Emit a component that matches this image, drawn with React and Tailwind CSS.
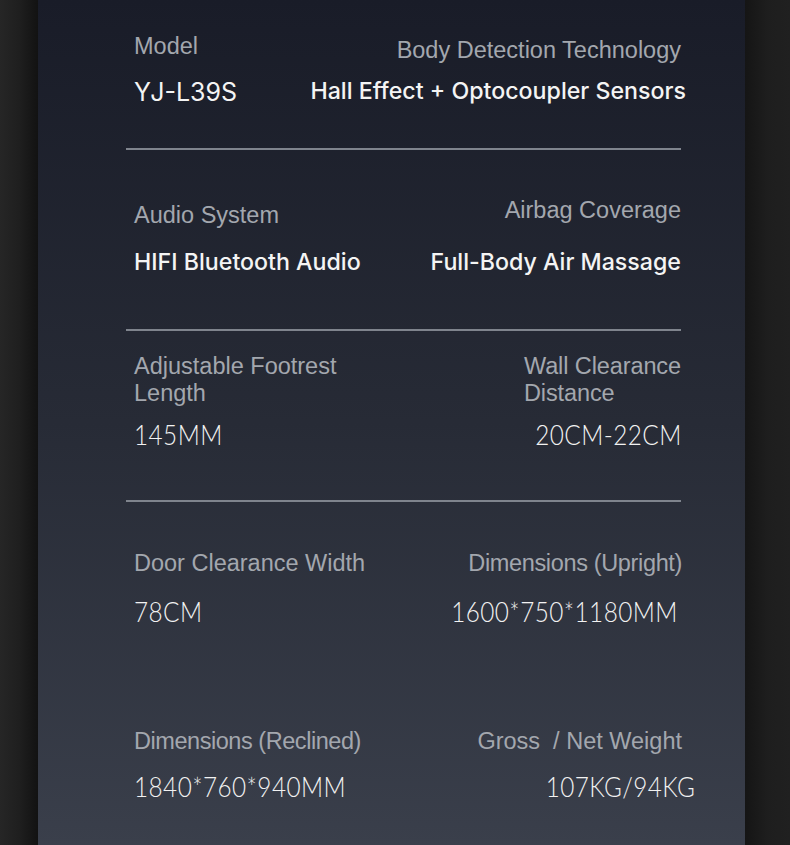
import React from "react";

const LABEL = "text-[23.5px] leading-[26px] text-[#a3a7ae] font-['Liberation_Sans',Arial,sans-serif]";
const BOLD = "text-[23.2px] leading-[30px] text-[#f4f4f4] font-medium font-['Inter','Liberation_Sans',sans-serif]";
const THIN = "inline-block text-[27px] leading-[30px] text-[#f2f2f2] font-light tracking-[0.5px] font-['Lato','Noto_Sans',sans-serif] scale-x-[0.9]";

function Divider() {
  return <div className="ml-[88px] h-[2px] w-[555px] bg-[#7f848d]" />;
}

export default function App() {
  return (
    <div className="flex h-[845px] w-[790px] overflow-hidden bg-[#161616]">
      <div className="w-[38px] bg-gradient-to-r from-[#262626] via-[#1f1f1f] to-[#121212]" />

      <div className="w-[707px] bg-gradient-to-b from-[#191c28] via-[#272b36] to-[#3a3f4b]">
        {/* model / sensors */}
        <div className="flex h-[148px] justify-between pl-[96px] pr-[59px]">
          <div className="pt-[33px]">
            <div className={LABEL}>Model</div>
            <div className={`${BOLD} mt-[18px] text-[25px] font-normal`}>YJ-L39S</div>
          </div>
          <div className="flex flex-col items-end pt-[37px]">
            <div className={`${LABEL} mr-[5px]`}>Body Detection Technology</div>
            <div className={`${BOLD} mt-[13px]`}>Hall Effect + Optocoupler Sensors</div>
          </div>
        </div>
        <Divider />

        {/* audio / airbag */}
        <div className="flex h-[179px] justify-between pl-[96px] pr-[64px]">
          <div className="pt-[52px]">
            <div className={LABEL}>Audio System</div>
            <div className={`${BOLD} mt-[19px]`}>HIFI Bluetooth Audio</div>
          </div>
          <div className="flex flex-col items-end pt-[47px]">
            <div className={LABEL}>Airbag Coverage</div>
            <div className={`${BOLD} mt-[24px]`}>Full-Body Air Massage</div>
          </div>
        </div>
        <Divider />

        {/* footrest / wall */}
        <div className="flex h-[169px] justify-between pl-[96px] pr-[63px]">
          <div className="pt-[22px]">
            <div className={`${LABEL} leading-[27px]`}>
              Adjustable Footrest
              <br />
              Length
            </div>
            <div className="mt-[13px]">
              <span className={`${THIN} origin-left`}>145MM</span>
            </div>
          </div>
          <div className="flex flex-col items-end pt-[22px]">
            <div className={`${LABEL} mr-[1px] text-left leading-[27px] tracking-[-0.1px]`}>
              Wall Clearance
              <br />
              Distance
            </div>
            <div className="mt-[13px]">
              <span className={`${THIN} origin-right`}>20CM-22CM</span>
            </div>
          </div>
        </div>
        <Divider />

        {/* door / dimensions / weight */}
        <div className="flex justify-between pl-[96px] pr-[63px]">
          <div className="pt-[48px]">
            <div className={LABEL}>Door Clearance Width</div>
            <div className="mt-[21px]">
              <span className={`${THIN} origin-left`}>78CM</span>
            </div>
            <div className={`${LABEL} mt-[100px] tracking-[-0.45px]`}>Dimensions (Reclined)</div>
            <div className="mt-[18px]">
              <span className={`${THIN} origin-left`}>1840*760*940MM</span>
            </div>
          </div>
          <div className="flex flex-col items-end pt-[48px]">
            <div className={`${LABEL} tracking-[-0.35px]`}>Dimensions (Upright)</div>
            <div className="mr-[4px] mt-[21px]">
              <span className={`${THIN} origin-right`}>1600*750*1180MM</span>
            </div>
            <div className={`${LABEL} mt-[100px]`}>Gross&nbsp; / Net Weight</div>
            <div className="mr-[-13px] mt-[18px]">
              <span className={`${THIN} origin-right`}>107KG/94KG</span>
            </div>
          </div>
        </div>
      </div>

      <div className="w-[45px] bg-gradient-to-r from-[#151515] via-[#1e1e1e] to-[#202020]" />
    </div>
  );
}
